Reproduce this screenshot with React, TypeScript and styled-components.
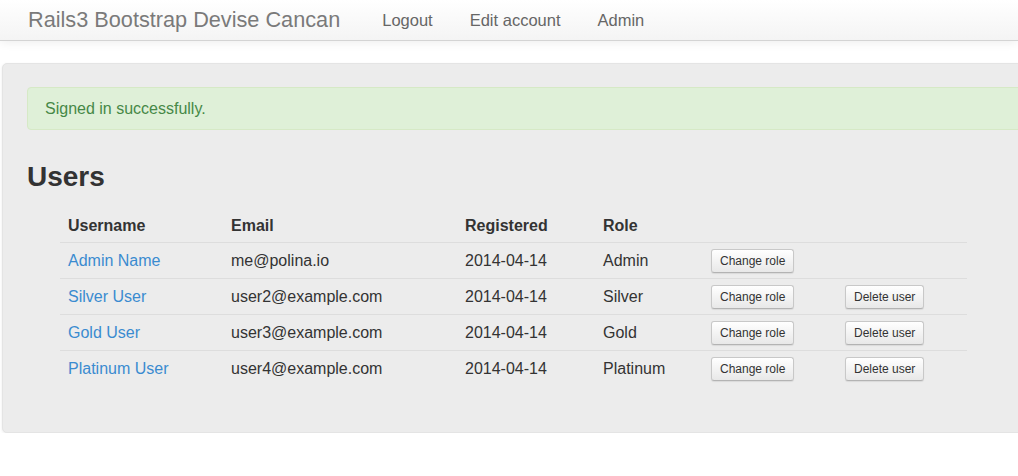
import styled, { createGlobalStyle } from "styled-components";

const GlobalStyle = createGlobalStyle`
  body {
    margin: 0;
    background: #fff;
    font-family: "Liberation Sans", Arial, sans-serif;
    color: #333;
    overflow: hidden;
  }
`;

const Navbar = styled.div`
  height: 41px;
  display: flex;
  align-items: center;
  padding-left: 28px;
  background: linear-gradient(to bottom, #ffffff, #f4f4f4);
  border-bottom: 1px solid #d4d4d4;
  box-shadow: 0 1px 10px rgba(0, 0, 0, 0.08);
  box-sizing: border-box;
`;

const Brand = styled.a`
  font-size: 21.7px;
  color: #7a7a7a;
  text-decoration: none;
  margin-right: 42px;
`;

const NavList = styled.ul`
  display: flex;
  list-style: none;
  margin: 0;
  padding: 0;
  gap: 37px;
`;

const NavItem = styled.li`
  font-size: 16.5px;
  color: #666;
  cursor: pointer;
`;

const Well = styled.div`
  margin: 22px 0 0 2px;
  width: 1100px;
  padding: 23px 24px 46px 24px;
  background: #ececec;
  border: 1px solid #e4e4e4;
  border-radius: 5px;
  box-shadow: 0 1px 3px rgba(0, 0, 0, 0.08);
  box-sizing: border-box;
`;

const Alert = styled.div`
  height: 43px;
  line-height: 41px;
  padding: 0 17px;
  background: #dff0d8;
  border: 1px solid #d6e9c6;
  border-radius: 4px;
  color: #468847;
  font-size: 16px;
  box-sizing: border-box;
`;

const Title = styled.h1`
  margin: 31px 0 13px 0;
  font-size: 28px;
  font-weight: bold;
  color: #333;
`;

const Table = styled.table`
  margin-left: 33px;
  width: 907px;
  border-collapse: collapse;
  table-layout: fixed;
  font-size: 16px;
`;

const Th = styled.th<{ $w: number }>`
  width: ${(p) => p.$w}px;
  box-sizing: border-box;
  text-align: left;
  padding: 10px 8px 6px 8px;
  line-height: 20px;
  font-weight: bold;
  color: #333;
`;

const Td = styled.td<{ $btn?: boolean }>`
  padding: ${(p) => (p.$btn ? "6px 8px 5px 8px" : "8px 8px 7px 8px")};
  line-height: 20px;
  border-top: 1px solid #dddddd;
  color: #333;
  vertical-align: middle;
  white-space: nowrap;
`;

const UserLink = styled.a`
  color: #3a8bd0;
  text-decoration: none;
`;

const Button = styled.button`
  height: 24px;
  padding: 0 8px;
  font-family: "Liberation Sans", Arial, sans-serif;
  font-size: 12px;
  color: #333;
  background: linear-gradient(to bottom, #ffffff, #e8e8e8);
  border: 1px solid #c8c8c8;
  border-bottom-color: #b3b3b3;
  border-radius: 3px;
  box-shadow: 0 1px 1px rgba(0, 0, 0, 0.08);
  cursor: pointer;
`;

const users = [
  { name: "Admin Name", email: "me@polina.io", role: "Admin", canDelete: false },
  { name: "Silver User", email: "user2@example.com", role: "Silver", canDelete: true },
  { name: "Gold User", email: "user3@example.com", role: "Gold", canDelete: true },
  { name: "Platinum User", email: "user4@example.com", role: "Platinum", canDelete: true },
];

export default function App() {
  return (
    <>
      <GlobalStyle />
      <Navbar>
        <Brand href="#">Rails3 Bootstrap Devise Cancan</Brand>
        <NavList>
          <NavItem>Logout</NavItem>
          <NavItem>Edit account</NavItem>
          <NavItem>Admin</NavItem>
        </NavList>
      </Navbar>

      <Well>
        <Alert>Signed in successfully.</Alert>
        <Title>Users</Title>
        <Table>
          <thead>
            <tr>
              <Th $w={163}>Username</Th>
              <Th $w={234}>Email</Th>
              <Th $w={138}>Registered</Th>
              <Th $w={108}>Role</Th>
              <Th $w={134}></Th>
              <Th $w={130}></Th>
            </tr>
          </thead>
          <tbody>
            {users.map((u) => (
              <tr key={u.email}>
                <Td>
                  <UserLink href="#">{u.name}</UserLink>
                </Td>
                <Td>{u.email}</Td>
                <Td>2014-04-14</Td>
                <Td>{u.role}</Td>
                <Td $btn>
                  <Button>Change role</Button>
                </Td>
                <Td $btn>{u.canDelete && <Button>Delete user</Button>}</Td>
              </tr>
            ))}
          </tbody>
        </Table>
      </Well>
    </>
  );
}
